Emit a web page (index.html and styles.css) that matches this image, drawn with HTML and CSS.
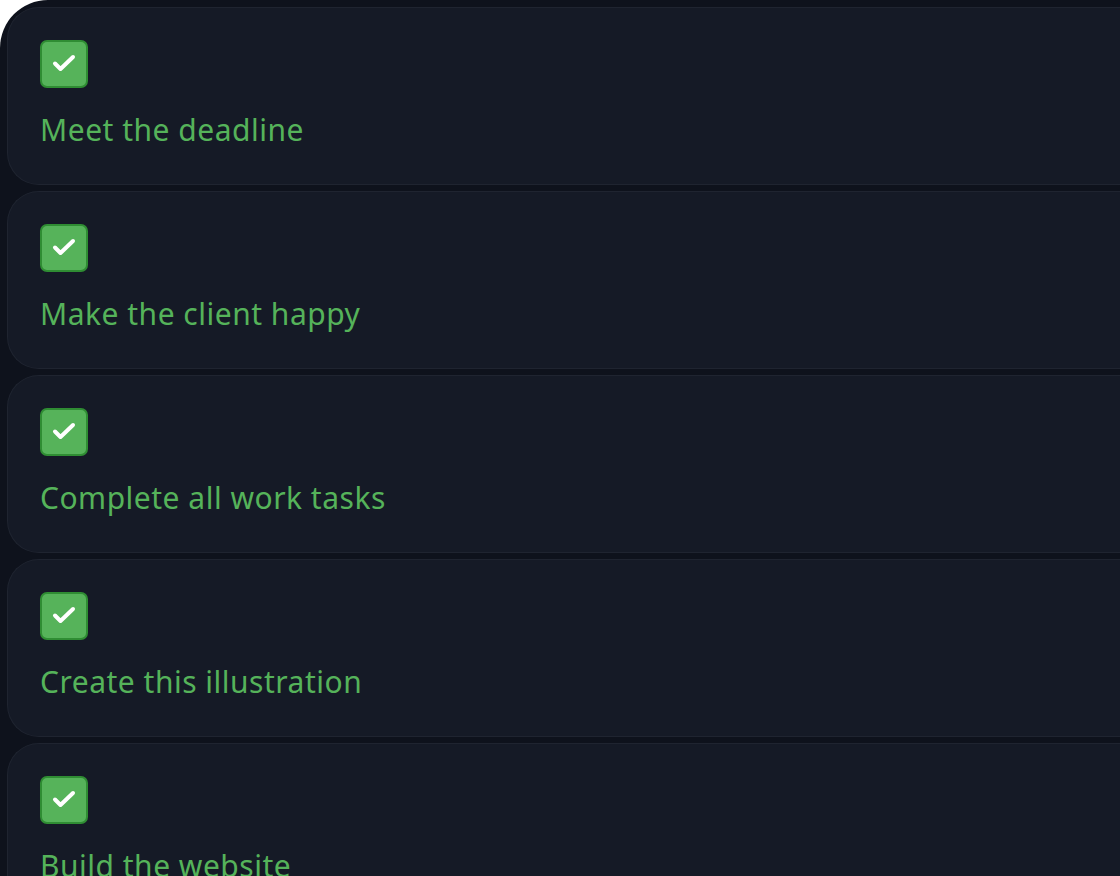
FILE: index.html
```html
<!DOCTYPE html>
<html lang="en">
<head>
    <meta charset="UTF-8">
    <meta name="viewport" content="width=device-width, initial-scale=1.0">
    <title>Tasks</title>
    <link rel="stylesheet" href="styles.css">
</head>
<body>
    <div class="board">
        <div class="task">
            <span class="check"><svg viewBox="0 0 44 44"><path d="M13 21.5l5.5 5.5L31 15"/></svg></span>
            <p class="task-title">Meet the deadline</p>
        </div>
        <div class="task">
            <span class="check"><svg viewBox="0 0 44 44"><path d="M13 21.5l5.5 5.5L31 15"/></svg></span>
            <p class="task-title">Make the client happy</p>
        </div>
        <div class="task">
            <span class="check"><svg viewBox="0 0 44 44"><path d="M13 21.5l5.5 5.5L31 15"/></svg></span>
            <p class="task-title">Complete all work tasks</p>
        </div>
        <div class="task">
            <span class="check"><svg viewBox="0 0 44 44"><path d="M13 21.5l5.5 5.5L31 15"/></svg></span>
            <p class="task-title">Create this illustration</p>
        </div>
        <div class="task">
            <span class="check"><svg viewBox="0 0 44 44"><path d="M13 21.5l5.5 5.5L31 15"/></svg></span>
            <p class="task-title">Build the website</p>
        </div>
    </div>
</body>
</html>
```

FILE: styles.css
```css
* {
    box-sizing: border-box;
    margin: 0;
    padding: 0;
}

body {
    background: #ffffff;
    font-family: 'Noto Sans', sans-serif;
    overflow: hidden;
}

.board {
    background: #0e121c;
    border-top-left-radius: 48px;
    padding: 7px 0 0 7px;
    min-height: 100vh;
    display: flex;
    flex-direction: column;
    gap: 6px;
}

.task {
    background: #151a26;
    border: 1px solid #1f2430;
    border-right: none;
    border-radius: 32px 0 0 32px;
    padding: 32px;
    display: flex;
    flex-direction: column;
    align-items: flex-start;
    gap: 20px;
}

.check {
    width: 48px;
    height: 48px;
    background: #56b35a;
    border: 2px solid #2f8d33;
    border-radius: 7px;
    display: flex;
}

.check svg {
    width: 44px;
    height: 44px;
    fill: none;
    stroke: #ffffff;
    stroke-width: 4;
    stroke-linecap: round;
    stroke-linejoin: round;
}

.task-title {
    color: #55b35a;
    font-size: 30px;
    line-height: 44px;
    letter-spacing: 0.5px;
}
```
